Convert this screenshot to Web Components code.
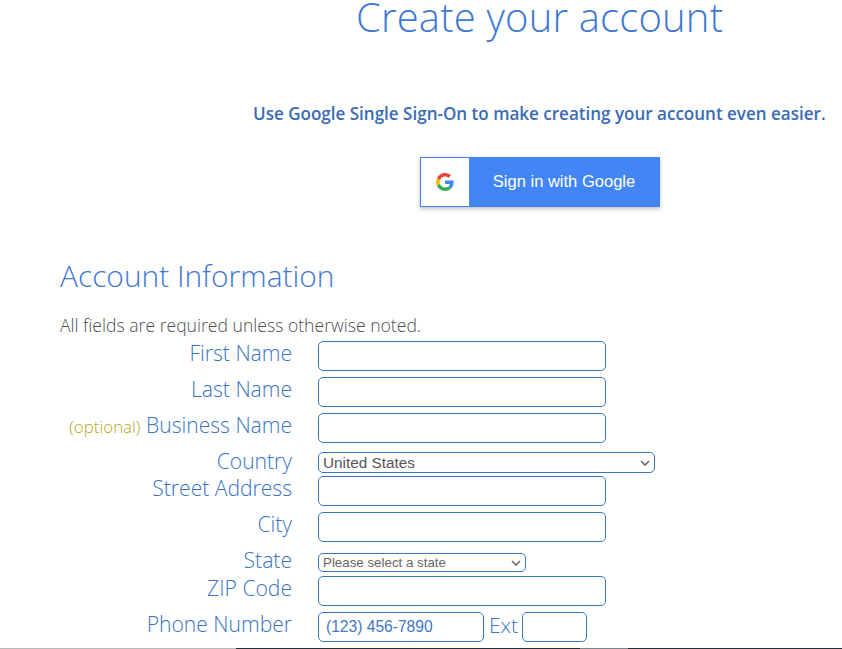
<!DOCTYPE html>
<html>
<head>
<meta charset="utf-8">
<title>Create your account</title>
<style>
  html, body { margin: 0; padding: 0; background: #fff; height: 649px; overflow: hidden; }
  body { font-family: "Open Sans", sans-serif; }
</style>
</head>
<body>
<signup-page>
  <google-signin slot="sso"></google-signin>
  <form-row label="First Name"><text-box></text-box></form-row>
  <form-row label="Last Name"><text-box></text-box></form-row>
  <form-row label="Business Name" optional><text-box></text-box></form-row>
  <form-row label="Country" style="--row-h: 27px; --ctl-top: 3px"><pick-box width="337" height="21" size="15.3" value="United States"></pick-box></form-row>
  <form-row label="Street Address"><text-box></text-box></form-row>
  <form-row label="City"><text-box></text-box></form-row>
  <form-row label="State" style="--row-h: 28px; --ctl-top: 5px"><pick-box width="208" height="19" size="13.33" value="Please select a state" muted></pick-box></form-row>
  <form-row label="ZIP Code"><text-box></text-box></form-row>
  <form-row label="Phone Number">
    <text-box width="166" value="(123) 456-7890"></text-box>
    <span class="ext">Ext</span>
    <text-box width="65"></text-box>
  </form-row>
</signup-page>

<script>
class SignupPage extends HTMLElement {
  constructor() {
    super();
    this.attachShadow({ mode: 'open' });
    this.shadowRoot.innerHTML = `
      <style>
        :host { display: block; width: 842px; height: 649px; position: relative; overflow: hidden; color: #3f78d8; }
        h1 { margin: 0; height: 78px; padding-left: 356px; font: 300 40px/34px "Open Sans", sans-serif; letter-spacing: .17px; color: #4078d4; white-space: nowrap; }
        .lead { margin: 0; padding: 24px 0 0 253px; height: 56px; box-sizing: border-box; font: 600 17.05px/24px "Open Sans", sans-serif; color: #3a6cb4; white-space: nowrap; }
        .sso { padding: 23px 0 0 420px; height: 100px; }
        h2 { margin: 0; padding-left: 60px; height: 57px; font: 300 29.9px/38px "Open Sans", sans-serif; color: #4078d4; white-space: nowrap; }
        .note { margin: 0; padding-left: 60px; height: 27px; font: 300 17.6px/22px "Open Sans", sans-serif; color: #4d4d4d; white-space: nowrap; }
        .rows { display: flex; flex-direction: column; }
        .strip { position: absolute; left: 0; right: 0; bottom: 0; height: 1px; background: linear-gradient(90deg, #b9b9b9 0 236px, #22303c 236px 580px, #7d858b 580px 628px, #22303c 628px); }
      </style>
      <h1>Create your account</h1>
      <p class="lead">Use Google Single Sign-On to make creating your account even easier.</p>
      <div class="sso"><slot name="sso"></slot></div>
      <h2>Account Information</h2>
      <p class="note">All fields are required unless otherwise noted.</p>
      <div class="rows"><slot></slot></div>
      <div class="strip"></div>
    `;
  }
}

class GoogleSignin extends HTMLElement {
  constructor() {
    super();
    this.attachShadow({ mode: 'open' });
    this.shadowRoot.innerHTML = `
      <style>
        :host { display: block; width: 240px; height: 50px; }
        .btn { display: flex; width: 100%; height: 100%; box-sizing: border-box; border: 1px solid #4285f4; background: #4285f4; box-shadow: 0 2px 4px rgba(0,0,0,.25); }
        .logo { width: 48px; background: #fff; display: flex; align-items: center; justify-content: center; }
        .label { flex: 1; text-align: center; font: 16.55px/47px "Liberation Sans", Arial, sans-serif; color: #fff; }
      </style>
      <div class="btn">
        <div class="logo">
          <svg width="18" height="18" viewBox="0 0 48 48">
            <path fill="#EA4335" d="M24 9.5c3.54 0 6.71 1.22 9.21 3.6l6.85-6.85C35.9 2.38 30.47 0 24 0 14.62 0 6.51 5.38 2.56 13.22l7.98 6.19C12.43 13.72 17.74 9.5 24 9.5z"/>
            <path fill="#4285F4" d="M46.98 24.55c0-1.57-.15-3.09-.38-4.55H24v9.02h12.94c-.58 2.96-2.26 5.48-4.78 7.18l7.73 6c4.51-4.18 7.09-10.36 7.09-17.65z"/>
            <path fill="#FBBC05" d="M10.53 28.59c-.48-1.45-.76-2.99-.76-4.59s.27-3.14.76-4.59l-7.98-6.19C.92 16.46 0 20.12 0 24c0 3.88.92 7.54 2.56 10.78l7.97-6.19z"/>
            <path fill="#34A853" d="M24 48c6.48 0 11.93-2.13 15.89-5.81l-7.73-6c-2.15 1.45-4.92 2.3-8.16 2.3-6.26 0-11.57-4.22-13.47-9.91l-7.98 6.19C6.51 42.62 14.62 48 24 48z"/>
          </svg>
        </div>
        <div class="label">Sign in with Google</div>
      </div>
    `;
  }
}

class FormRow extends HTMLElement {
  constructor() {
    super();
    this.attachShadow({ mode: 'open' });
  }
  connectedCallback() {
    const label = this.getAttribute('label');
    const opt = this.hasAttribute('optional') ? '<span class="opt">(optional)</span> ' : '';
    this.shadowRoot.innerHTML = `
      <style>
        :host { display: grid; grid-template-columns: 232px auto; column-gap: 26px; padding-left: 60px; height: var(--row-h, 36px); align-items: start; font: 300 21.1px/26px "Open Sans", sans-serif; }
        .lbl { text-align: right; color: #3873c4; white-space: nowrap; margin-top: -1px; height: 26px; }
        .opt { font-size: 16.9px; color: #b5a81c; }
        .ctl { display: flex; align-items: center; gap: 5px; padding-top: var(--ctl-top, 0); color: #3873c4; }
        ::slotted(.ext) { font: 300 21px/26px "Open Sans", sans-serif; color: #3873c4; margin-right: -1px; align-self: flex-start; }
      </style>
      <div class="lbl">${opt}${label}</div>
      <div class="ctl"><slot></slot></div>
    `;
  }
}

class TextBox extends HTMLElement {
  constructor() {
    super();
    this.attachShadow({ mode: 'open' });
  }
  connectedCallback() {
    const w = this.getAttribute('width') || 288;
    const v = this.getAttribute('value') || '';
    this.shadowRoot.innerHTML = `
      <style>
        :host { display: block; }
        input { display: block; box-sizing: border-box; width: ${w}px; height: 30px; border: 1px solid #3a76bd; border-radius: 5px; padding: 0 7px; outline: 0; background: #fff; font: 15.6px "Liberation Sans", Arial, sans-serif; color: #3f78c8; }
      </style>
      <input type="text" value="${v}">
    `;
  }
}

class PickBox extends HTMLElement {
  constructor() {
    super();
    this.attachShadow({ mode: 'open' });
  }
  connectedCallback() {
    const w = this.getAttribute('width');
    const h = this.getAttribute('height');
    const v = this.getAttribute('value');
    const size = this.getAttribute('size');
    const ink = this.hasAttribute('muted') ? '#666' : '#555';
    this.shadowRoot.innerHTML = `
      <style>
        :host { display: block; position: relative; }
        .box { box-sizing: border-box; width: ${w}px; height: ${h}px; border: 1px solid #3a76bd; border-radius: 5px; padding-left: 4px; background: #fff; font: ${size}px/${h - 2}px "Liberation Sans", Arial, sans-serif; color: ${ink}; white-space: nowrap; position: relative; }
        svg { position: absolute; right: 4px; top: 50%; margin-top: -3px; }
      </style>
      <div class="box">${v}<svg width="10" height="6" viewBox="0 0 10 6"><path d="M1 1l4 4 4-4" fill="none" stroke="#666" stroke-width="1.6"/></svg></div>
    `;
  }
}

customElements.define('signup-page', SignupPage);
customElements.define('google-signin', GoogleSignin);
customElements.define('form-row', FormRow);
customElements.define('text-box', TextBox);
customElements.define('pick-box', PickBox);
</script>
</body>
</html>
